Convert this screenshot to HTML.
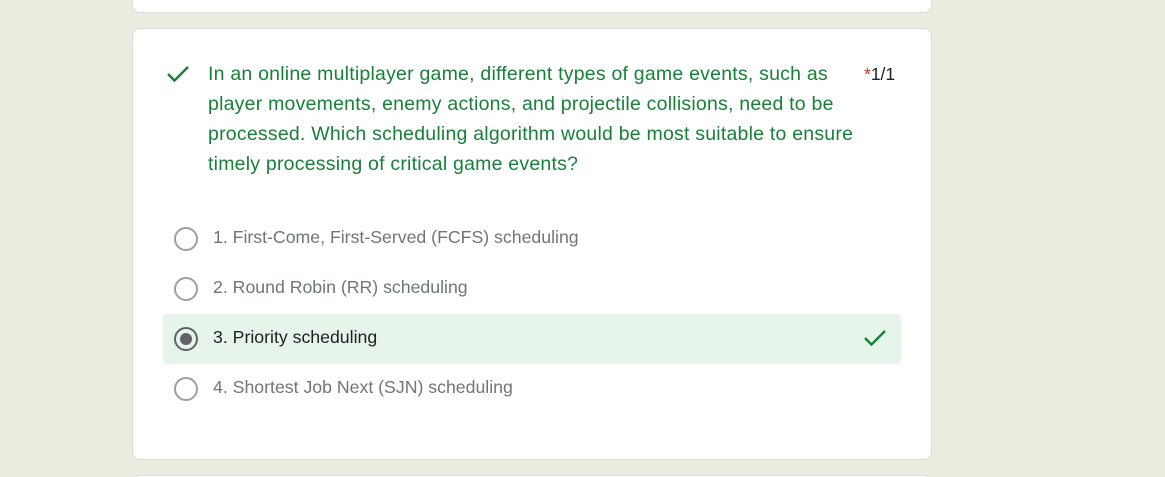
<!DOCTYPE html>
<html><head><style>
html,body{margin:0;width:1165px;height:477px;overflow:hidden}
body{background:#e9ecdf;position:relative;font-family:"Liberation Sans",Arial,sans-serif}
.card{position:absolute;left:132px;width:798px;background:#fff;border:1px solid #dadce0;border-radius:8px}
.q{position:absolute;left:208px;top:59px;width:650px;font-size:19.5px;line-height:30px;color:#188038;letter-spacing:0.22px}
.score{position:absolute;left:864px;top:64px;font-size:17.5px;color:#202124}
.score span{color:#d93025}
.opt{position:absolute;left:213px;font-size:17.7px;color:#70757a}
.rad{position:absolute;left:174px;width:20px;height:20px;border:2px solid #9aa0a6;border-radius:50%}
.hl{position:absolute;left:163px;top:314px;width:738px;height:50px;background:#e6f4ea;border-radius:4px}
</style></head><body>
<div class="card" style="top:-10px;height:21px"></div>
<div class="card" style="top:28px;height:430px"></div>
<div class="card" style="top:475px;height:20px"></div>
<svg style="position:absolute;left:166px;top:63px" width="26" height="22" viewBox="0 0 26 22"><path d="M2 11 L8.5 17.5 L22 4" fill="none" stroke="#188038" stroke-width="2.4"/></svg>
<div class="q">In an online multiplayer game, different types of game events, such as player movements, enemy actions, and projectile collisions, need to be processed. Which scheduling algorithm would be most suitable to ensure timely processing of critical game events?</div>
<div class="score"><span>*</span>1/1</div>
<div class="hl"></div>
<div class="rad" style="top:227px"></div><div class="opt" style="top:227px">1. First-Come, First-Served (FCFS) scheduling</div>
<div class="rad" style="top:277px"></div><div class="opt" style="top:277px">2. Round Robin (RR) scheduling</div>
<div class="rad" style="top:327px;border-color:#5f6368"><div style="position:absolute;left:4px;top:4px;width:12px;height:12px;border-radius:50%;background:#5f6368"></div></div><div class="opt" style="top:327px;color:#202124">3. Priority scheduling</div>
<svg style="position:absolute;left:863px;top:327px" width="26" height="22" viewBox="0 0 26 22"><path d="M2 11 L8.5 17.5 L22 4" fill="none" stroke="#188038" stroke-width="2.4"/></svg>
<div class="rad" style="top:377px"></div><div class="opt" style="top:377px">4. Shortest Job Next (SJN) scheduling</div>
</body></html>
